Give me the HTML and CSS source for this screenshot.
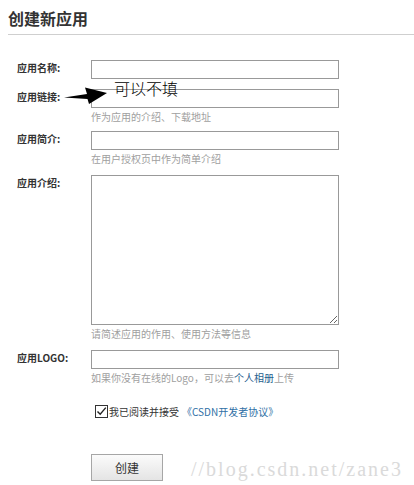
FILE: index.html
```html
<!DOCTYPE html>
<html lang="zh-CN">
<head>
<meta charset="utf-8">
<title>创建新应用</title>
<link rel="stylesheet" href="styles.css">
</head>
<body>
<div class="page">
  <h1 class="title">创建新应用</h1>
  <form class="form">
    <div class="row">
      <label class="label">应用名称:</label>
      <div class="field"><input class="input" type="text"></div>
    </div>
    <div class="row tight">
      <label class="label">应用链接:</label>
      <div class="field">
        <input class="input" type="text">
        <div class="hint">作为应用的介绍、下载地址</div>
      </div>
    </div>
    <div class="row">
      <label class="label">应用简介:</label>
      <div class="field">
        <input class="input" type="text">
        <div class="hint">在用户授权页中作为简单介绍</div>
      </div>
    </div>
    <div class="row">
      <label class="label">应用介绍:</label>
      <div class="field">
        <textarea class="textarea"></textarea>
        <div class="hint">请简述应用的作用、使用方法等信息</div>
      </div>
    </div>
    <div class="row">
      <label class="label">应用LOGO:</label>
      <div class="field">
        <input class="input" type="text">
        <div class="hint">如果你没有在线的Logo，可以去<a class="hint-link" href="#">个人相册</a>上传</div>
      </div>
    </div>
    <div class="agree">
      <span class="check"><svg width="13" height="13" viewBox="0 0 13 13"><rect x="0.5" y="0.5" width="12" height="12" fill="#fff" stroke="#333"/><path d="M2.5 6.5 L5.2 9.3 L10.8 2.6" fill="none" stroke="#222" stroke-width="1.4"/></svg></span>
      <span class="agree-text">我已阅读并接受</span>
      <a class="agree-link" href="#">《CSDN开发者协议》</a>
    </div>
    <div class="actions">
      <button class="btn" type="button">创建</button>
    </div>
  </form>

  <svg class="arrow" width="46" height="20" viewBox="0 0 46 20">
    <polygon points="1,11.5 24,8 22,1.5 44,7 26,18 24.5,13" fill="#000"/>
  </svg>
  <div class="note">可以不填</div>
  <div class="watermark">//blog.csdn.net/zane3</div>
</div>
</body>
</html>
```

FILE: styles.css
```css
html, body {
  margin: 0;
  padding: 0;
  background: #fff;
}
.page {
  position: relative;
  padding: 8px 0 0 8px;
  height: 477px;
  font-family: "Noto Sans CJK SC", "Noto Sans", sans-serif;
  color: #333;
}
.title {
  margin: 0;
  font-size: 16px;
  line-height: 20px;
  font-weight: bold;
  color: #333;
  padding-bottom: 6px;
  border-bottom: 1px solid #cfcfcf;
}
.form {
  margin: 25px 0 0 0;
  display: flex;
  flex-direction: column;
}
.row {
  display: flex;
  align-items: flex-start;
  margin-bottom: 10px;
}
.row.tight {
  margin-bottom: 8px;
}
.label {
  box-sizing: border-box;
  width: 83px;
  padding: 2px 0 0 9px;
  font-size: 10px;
  line-height: 12px;
  font-weight: bold;
  color: #333;
}
.field {
  display: flex;
  flex-direction: column;
}
.input {
  box-sizing: border-box;
  width: 248px;
  height: 19px;
  margin: 0;
  padding: 0 3px;
  border: 1px solid #999;
  border-radius: 0;
  background: #fff;
  outline: none;
}
.textarea {
  box-sizing: border-box;
  width: 248px;
  height: 150px;
  margin: 0;
  padding: 2px;
  border: 1px solid #999;
  border-radius: 0;
  background: #fff;
  outline: none;
  resize: both;
}
.hint {
  margin-top: 3px;
  font-size: 10px;
  line-height: 12px;
  color: #a0a0a0;
}
.hint-link {
  color: #1f5e8e;
  text-decoration: none;
}
.agree {
  display: flex;
  align-items: center;
  margin: 10px 0 0 87px;
  height: 14px;
}
.check {
  display: flex;
  margin-right: 1px;
}
.agree-text {
  font-size: 10px;
  line-height: 12px;
  color: #333;
  padding-top: 2px;
}
.agree-link {
  margin-left: 3px;
  font-size: 10px;
  line-height: 12px;
  color: #2f6fa5;
  text-decoration: none;
  padding-top: 2px;
}
.actions {
  margin: 36px 0 0 83px;
}
.btn {
  box-sizing: border-box;
  width: 72px;
  height: 27px;
  margin: 0;
  padding: 0;
  border: 1px solid #a6a6a6;
  border-radius: 0;
  background: linear-gradient(#fbfbfb, #e4e4e4);
  font-family: "Noto Sans CJK SC", sans-serif;
  font-size: 12px;
  color: #333;
}
.arrow {
  position: absolute;
  left: 63px;
  top: 86px;
}
.note {
  position: absolute;
  left: 114px;
  top: 78px;
  font-size: 16px;
  line-height: 20px;
  color: #000;
  font-family: "Noto Sans CJK SC", sans-serif;
  font-weight: 300;
}
.watermark {
  position: absolute;
  left: 191px;
  top: 459px;
  font-family: "Liberation Serif", serif;
  font-size: 20px;
  line-height: 20px;
  letter-spacing: 2px;
  color: #dadada;
}
```
